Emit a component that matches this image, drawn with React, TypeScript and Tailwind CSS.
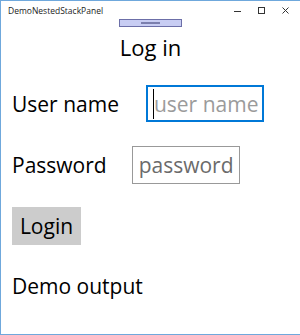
export default function App() {
  return (
    <div className="w-[300px] h-[335px] bg-white border-t border-l border-b border-[#6fa8dc] flex flex-col font-['Open_Sans',sans-serif] text-black overflow-hidden">
      {/* Title bar */}
      <div className="h-[17px] flex items-start justify-between pl-[7px] pt-[5px]">
        <span className="text-[8.5px] leading-[10px] text-[#222]">DemoNestedStackPanel</span>
        <div className="flex items-center gap-[16px] pr-[10px] pt-[1px]">
          <svg width="8" height="8" viewBox="0 0 8 8">
            <line x1="0" y1="4.5" x2="7" y2="4.5" stroke="#333" strokeWidth="1" />
          </svg>
          <svg width="8" height="8" viewBox="0 0 8 8">
            <rect x="0.5" y="0.5" width="6" height="6" fill="none" stroke="#333" strokeWidth="1" />
          </svg>
          <svg width="8" height="8" viewBox="0 0 8 8">
            <path d="M0.5 0.5L6.5 6.5M6.5 0.5L0.5 6.5" stroke="#333" strokeWidth="1" />
          </svg>
        </div>
      </div>

      {/* Drag handle */}
      <div className="self-center w-[63px] h-[8px] mt-[1px] bg-[#c8cdf3] border border-[#6c6fa8] flex items-center justify-center">
        <div className="w-[19px] h-[2px] bg-[#7b7fae]" />
      </div>

      <div className="text-center text-[22px] leading-[28px] mt-[6px]">Log in</div>

      {/* User name row */}
      <div className="flex items-center pl-[11px] mt-[24px]">
        <span className="text-[21px] leading-[28px]">User name</span>
        <div className="ml-[27px] w-[118px] h-[37px] border-2 border-[#0078d7] flex items-center pl-[5px]">
          <div className="w-[1px] h-[30px] bg-black" />
          <span className="text-[21px] leading-[28px] text-[#9b9b9b]">user name</span>
        </div>
      </div>

      {/* Password row */}
      <div className="flex items-center pl-[11px] mt-[24px]">
        <span className="text-[21px] leading-[28px]">Password</span>
        <div className="ml-[25px] w-[108px] h-[38px] border border-[#999] flex items-center pl-[6px]">
          <span className="text-[21px] leading-[28px] text-[#6b6b6b]">password</span>
        </div>
      </div>

      <button className="self-start ml-[11px] mt-[23px] w-[69px] h-[38px] bg-[#cccccc] text-[21px] leading-[28px] flex items-center justify-center">
        Login
      </button>

      <div className="pl-[11px] mt-[27px] text-[21px] leading-[28px]">Demo output</div>
    </div>
  );
}
